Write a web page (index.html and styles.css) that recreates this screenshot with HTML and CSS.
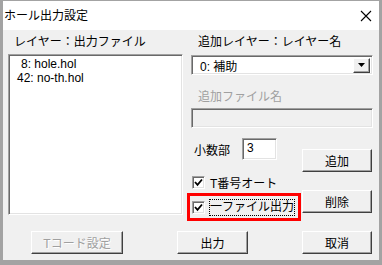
FILE: index.html
```html
<!DOCTYPE html>
<html lang="ja">
  <head>
    <meta charset="UTF-8" />
    <title>ホール出力設定</title>
    <link rel="stylesheet" href="styles.css">
  </head>

  <body>
    <div class="window">
      <div class="titlebar">
        <span class="title">ホール出力設定</span>
        <svg class="close" width="12" height="12" viewBox="0 0 12 12">
          <path d="M1 1L11 11M11 1L1 11" stroke="#000" stroke-width="1.1" fill="none" />
        </svg>
      </div>

      <div class="dialog">
        <div class="main">
          <div class="col-left">
            <div class="label">レイヤー：出力ファイル</div>
            <div class="listbox">
              <div class="item first">8: hole.hol</div>
              <div class="item">42: no-th.hol</div>
            </div>
          </div>

          <div class="col-right">
            <div class="label">追加レイヤー：レイヤー名</div>
            <div class="combo">
              <span class="combo-text">0: 補助</span>
              <span class="combo-btn">
                <svg width="7" height="4" viewBox="0 0 7 4"><polygon points="0,0 7,0 3.5,4" fill="#000" /></svg>
              </span>
            </div>
            <div class="label disabled file-label">追加ファイル名</div>
            <div class="textbox"></div>

            <div class="lower">
              <div class="lower-left">
                <div class="decimal-row">
                  <span>小数部</span>
                  <span class="input">3</span>
                </div>
                <div class="check-row auto">
                  <span class="checkbox">
                    <svg width="9" height="9" viewBox="0 0 9 9"><polyline points="1,4 3.5,6.8 8,1.5" stroke="#000" stroke-width="1.8" fill="none" /></svg>
                  </span>
                  <span>T番号オート</span>
                </div>
                <div class="highlight">
                  <div class="check-row">
                    <span class="checkbox">
                      <svg width="9" height="9" viewBox="0 0 9 9"><polyline points="1,4 3.5,6.8 8,1.5" stroke="#000" stroke-width="1.8" fill="none" /></svg>
                    </span>
                    <span class="focus">一ファイル出力</span>
                  </div>
                </div>
              </div>
              <div class="lower-right">
                <div class="btn">追加</div>
                <div class="btn">削除</div>
              </div>
            </div>
          </div>
        </div>

        <div class="bottom-row">
          <div class="btn disabled-btn tcode">Tコード設定</div>
          <div class="btn output">出力</div>
          <div class="btn cancel">取消</div>
        </div>
      </div>
    </div>
  </body>
</html>
```

FILE: styles.css
```css
body,
html {
  margin: 0;
  font-family: "Liberation Sans", "Noto Sans CJK JP", sans-serif;
  font-size: 12px;
  color: #000;
}

.window {
  width: 382px;
  height: 265px;
  box-sizing: border-box;
  border: 3px solid #a3a3a3;
  border-top-width: 1px;
  border-bottom-width: 5px;
  background: #f0f0f0;
  display: flex;
  flex-direction: column;
}

.titlebar {
  height: 29px;
  background: #fff;
  display: flex;
  align-items: center;
  justify-content: space-between;
  padding: 0 7px 0 1px;
}
.title {
  line-height: 14px;
}

.dialog {
  flex: 1;
}

.main {
  display: grid;
  grid-template-columns: 175px 182px;
  column-gap: 8px;
  padding: 5px 0 0 5px;
}

.label {
  height: 14px;
  line-height: 14px;
  white-space: nowrap;
}
.col-left .label {
  padding-left: 6px;
}
.col-right .label {
  padding-left: 7px;
}
.disabled {
  color: #a0a0a0;
}

/* sunken boxes */
.listbox,
.combo,
.textbox,
.input,
.checkbox {
  box-sizing: border-box;
  background: #fff;
  border: 1px solid;
  border-color: #a0a0a0 #fff #fff #a0a0a0;
  box-shadow: inset 1px 1px #696969, inset -1px -1px #e3e3e3;
}

.listbox {
  margin-top: 5px;
  height: 161px;
  padding: 2px 0 0 8px;
}
.item {
  line-height: 14px;
  white-space: nowrap;
}
.item.first {
  padding-left: 4px;
}

.combo {
  margin-top: 6px;
  height: 20px;
  display: flex;
  align-items: center;
  justify-content: space-between;
  padding: 0 2px 0 8px;
}
.combo-btn {
  width: 17px;
  height: 15px;
  box-sizing: border-box;
  background: #f0f0f0;
  border: 1px solid;
  border-color: #fff #404040 #404040 #fff;
  box-shadow: inset -1px -1px #a0a0a0;
  display: flex;
  align-items: center;
  justify-content: center;
}

.file-label {
  margin-top: 15px;
}
.textbox {
  margin-top: 4px;
  height: 20px;
  background: #f0f0f0;
}

.lower {
  display: flex;
}
.lower-left {
  width: 111px;
  display: flex;
  flex-direction: column;
}
.decimal-row {
  margin-top: 10px;
  height: 22px;
  display: flex;
  align-items: center;
  padding-left: 3px;
}
.input {
  margin-left: 12px;
  width: 35px;
  height: 22px;
  padding-left: 4px;
  line-height: 19px;
}

.check-row {
  display: flex;
  align-items: center;
  height: 16px;
  white-space: nowrap;
}
.check-row.auto {
  margin-top: 14px;
  padding-left: 1px;
}
.checkbox {
  width: 13px;
  height: 13px;
  margin-right: 5px;
  display: flex;
  align-items: center;
  justify-content: center;
}

.highlight {
  margin: 3px 0 0 -4px;
  width: 114px;
  height: 28px;
  box-sizing: border-box;
  border: 3px solid #f00;
  display: flex;
  align-items: center;
  padding-left: 2px;
}
.highlight .checkbox {
  margin-right: 4px;
}
.focus {
  border: 1px dotted #000;
  line-height: 15px;
}

.lower-right {
  width: 70px;
  display: flex;
  flex-direction: column;
}
.lower-right .btn:first-child {
  margin-top: 21px;
}
.lower-right .btn + .btn {
  margin-top: 18px;
}

/* raised buttons */
.btn {
  height: 23px;
  box-sizing: border-box;
  background: #f0f0f0;
  border: 1px solid;
  border-color: #fff #404040 #404040 #fff;
  box-shadow: inset -1px -1px #a0a0a0;
  display: flex;
  align-items: center;
  justify-content: center;
  white-space: nowrap;
}
.disabled-btn {
  color: #a0a0a0;
  text-shadow: 1px 1px #fff;
}

.bottom-row {
  display: flex;
  gap: 54px;
  padding: 10px 0 0 28px;
}
.tcode {
  width: 92px;
}
.output {
  width: 71px;
}
.cancel {
  width: 70px;
}
```
